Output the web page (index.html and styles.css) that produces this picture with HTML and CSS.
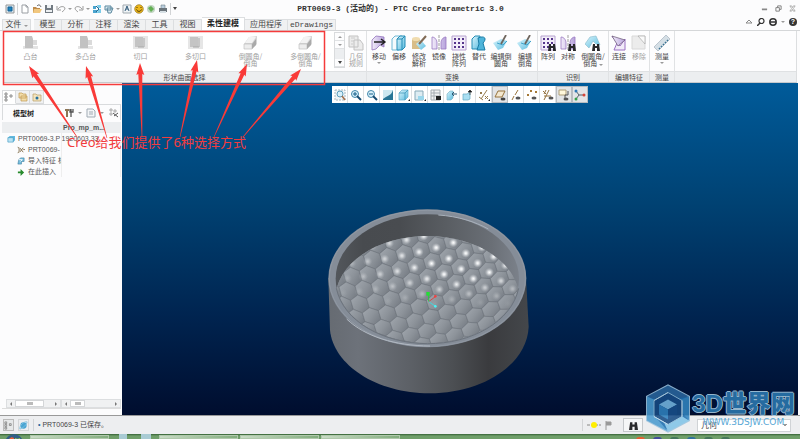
FILE: index.html
```html
<!DOCTYPE html>
<html lang="zh-CN">
<head>
<meta charset="utf-8">
<title>PRT0069-3 (活动的) - PTC Creo Parametric 3.0</title>
<link rel="stylesheet" href="styles.css">
</head>
<body>
<svg class="defs" aria-hidden="true">
  <defs>
    <linearGradient id="cyan" x1="0" y1="0" x2="1" y2="1"><stop offset="0" stop-color="#d9f4fc"/><stop offset="1" stop-color="#5bbcdf"/></linearGradient>
    <linearGradient id="lilac"><stop offset="0" stop-color="#f2ecfa"/><stop offset="1" stop-color="#b7a3dc"/></linearGradient>
    <symbol id="app" viewBox="0 0 10 10"><path d="M1 1h8v8H1z" fill="#d7e6ef" stroke="#999"/><path d="M3 3h4v4H3z" fill="#1c86c0" stroke="#145f94"/></symbol>
    <symbol id="new" viewBox="0 0 10 10"><path d="M2 1h4l2 2v6H2z" fill="#fff" stroke="#9a9ea3"/><path d="M6 1v2h2" fill="none" stroke="#9a9ea3"/></symbol>
    <symbol id="open" viewBox="0 0 10 10"><path d="M1 3h3l1 1h3v5H1z" fill="#bd8a4a"/><path d="M2 5h8L8 9H1z" fill="#f1c77f"/><path d="M5 2c2-2 3-1 4 1" fill="none" stroke="#555"/></symbol>
    <symbol id="save" viewBox="0 0 10 10"><path d="M1 1h8v8H1z" fill="#727a82"/><path d="M3 1h4v3H3zM2 6h6v2H2z" fill="#edf0f2"/></symbol>
    <symbol id="undo" viewBox="0 0 10 10"><path d="M2 5c2-3 6-3 7-1 0 2-2 3-3 4M1 2v4h4" fill="none" stroke="#9b9b9b"/></symbol>
    <symbol id="regen" viewBox="0 0 10 10"><path d="M1 2h3v3H1zM1 6h4v3H1z" fill="#49a4cf"/><path d="M5 1h4v3H6zM6 5h3v4H5z" fill="#7ccbe8"/><path d="M4 2l3 3-3 3" fill="none" stroke="#27678e"/></symbol>
    <symbol id="win" viewBox="0 0 10 10"><path d="M1 2h6v4H1zM3 4h6l-2 5H4z" fill="#dcecf3" stroke="#5b879e"/></symbol>
    <symbol id="atext" viewBox="0 0 10 10"><path d="M1 1h8v8H1z" fill="#eef3f6" stroke="#a1a9af"/><path d="M3 7l2-5 2 5M4 5h2" fill="none" stroke="#355d7c"/></symbol>
    <symbol id="smile" viewBox="0 0 10 10"><circle cx="5" cy="5" r="4.3" fill="#edb71b" stroke="#846413" stroke-width=".6"/><path d="M3 3v1M7 3v1M2.500 5.500c1 2.500 4 2.500 5 0" fill="none" stroke="#493709"/></symbol>
    <symbol id="globe" viewBox="0 0 10 10"><circle cx="5" cy="5" r="4" fill="#c1d5c2"/><path d="M2 4l3-2 3 3-3 3z" fill="#63b053"/></symbol>
    <symbol id="print" viewBox="0 0 10 10"><path d="M3 1h4v4H3z" fill="#b9cddd" stroke="#71808b" stroke-width=".6"/><path d="M1 4h8v4H1z" fill="#6b747b"/><path d="M2 7h6v2H2z" fill="#d7e0e5"/></symbol>

    <symbol id="boss" viewBox="0 0 16 16"><path d="M0 11h15v3H0z" fill="#e4e4e4"/><path d="M2 1h7l1 3v9H2z" fill="#c2c2c2"/><path d="M10 5h4v5h-4z" fill="#dadada"/></symbol>
    <symbol id="cut" viewBox="0 0 16 16"><path d="M0 1h15v13H0z" fill="#e6e6e6"/><path d="M2 2h8v10H2z" fill="#c4c4c4"/><path d="M11 3v9H5" fill="none" stroke="#a8a8a8"/></symbol>
    <symbol id="round" viewBox="0 0 16 16"><path d="M1 9l5-7 8-1v8l-5 5H1z" fill="#d5d5d5"/><path d="M1 9h8v5H1z" fill="#ededed" stroke="#bbb" stroke-width=".6"/><path d="M6 2h7L9 8H2z" fill="#f3f3f3"/><path d="M9 9l4-5v6l-4 4z" fill="#aaa"/></symbol>
    <symbol id="rules" viewBox="0 0 16 16"><path d="M1 1h9v11H1zM6 5h6l3 4v6H6z" fill="#ececec" stroke="#c2c2c2"/><path d="M3 3h4M3 6h3M3 9h2" stroke="#ccc"/></symbol>
    <symbol id="move" viewBox="0 0 16 16"><path d="M1 5l4-4 8 1v10l-4-2-4 4-4 1z" fill="url(#lilac)" stroke="#9373bd" stroke-width=".8"/><path d="M3 7h10M10 4l4 3-4 3" fill="none" stroke="#222" stroke-width="1.400"/></symbol>
    <symbol id="offset" viewBox="0 0 16 16"><path d="M1 4l3-3h7L8 4v11H1z" fill="#f4fafc" stroke="#71b8d5"/><path d="M6 4l3-3h5v11l-3 3H6z" fill="url(#cyan)" stroke="#248db7"/><path d="M6 4h5v11M11 4l3-3" fill="none" stroke="#248db7"/></symbol>
    <symbol id="modify" viewBox="0 0 16 16"><path d="M1 4h8v10H1z" fill="#d8bd88"/><ellipse cx="5" cy="4" rx="4" ry="2" fill="#f0dcaf"/><path d="M5 9l5-4 5 6-5 4z" fill="url(#cyan)"/><path d="M15 1L8 9" stroke="#816b56" stroke-width="2"/></symbol>
    <symbol id="mirror" viewBox="0 0 16 16"><path d="M1 2c3 0 5 3 5 6v6H1zM15 2c-3 0-5 3-5 6v6h5z" fill="url(#lilac)" stroke="#9b78c2" stroke-width=".8"/><path d="M8 0v16" stroke="#777" stroke-dasharray="3 1" stroke-width=".7"/></symbol>
    <symbol id="pattern" viewBox="0 0 16 16"><path d="M1 1h14v14H1z" fill="#f3eef9" stroke="#b6a2cf"/><path d="M3 4h2M7 4h2M11 4h2M3 8h2M7 8h2M11 8h2M3 12h2M7 12h2M11 12h2" stroke="#56358b" stroke-width="2"/></symbol>
    <symbol id="replace" viewBox="0 0 16 16"><path d="M1 4l3-3h5v13H1z" fill="url(#cyan)" stroke="#268db5"/><path d="M7 3c7-3 9 1 5 5l2 7H6l2-6z" fill="#4eb4da" stroke="#197ca6"/></symbol>
    <symbol id="editround" viewBox="0 0 16 16"><path d="M0 8l8-4 6 2-4 7-5 2z" fill="url(#cyan)"/><path d="M4 8l6 2 4-4" fill="none" stroke="#40a2ca"/><path d="M13 0L8 9" stroke="#6f665e" stroke-width="1.800"/></symbol>
    <symbol id="binos" viewBox="0 0 8 8"><path d="M1 1h2v2h2V1h2l1 7H5V5H3v3H0z" fill="#29292c"/></symbol>
    <symbol id="findround" viewBox="0 0 16 16"><path d="M0 9l5-7 6-1 4 9-4-1-3-3-4 7z" fill="url(#cyan)" stroke="#87b8ca" stroke-width=".6"/><use href="#binos" x="7" y="8" width="8" height="8"/></symbol>
    <symbol id="connect" viewBox="0 0 16 16"><path d="M1 1l8 10L14 4v11H3l3-7z" fill="#f1ebf8" stroke="#9a70c3"/><path d="M1 1l13 4-7 6z" fill="url(#lilac)" stroke="#655471" stroke-width=".7"/></symbol>
    <symbol id="remove" viewBox="0 0 16 16"><path d="M1 1h13v13H1z" fill="#ececec" stroke="#d8d8d8"/><path d="M7 1l7 8V1z" fill="#fafafa" stroke="#aaa" stroke-width=".7"/></symbol>
    <symbol id="ruler" viewBox="0 0 16 16"><path d="M0 12L12 0l4 4L4 16z" fill="#d5dfe6" stroke="#9caab5" stroke-width=".6"/><path d="M5 13l1 1M7 11l1 1M9 9l1 1M11 7l1 1M13 5l1 1" stroke="#397393" stroke-width="1.500"/></symbol>

    <symbol id="v-fit" viewBox="0 0 12 12"><path d="M1 1h10v10H1z" fill="#eef4f7" stroke="#a6b8c0" stroke-dasharray="2 1"/><circle cx="6" cy="5" r="3" fill="#d7f0fa" stroke="#5e9fbd"/><path d="M8 7l3 4" stroke="#a5714d" stroke-width="1.500"/></symbol>
    <symbol id="v-in" viewBox="0 0 12 12"><circle cx="5" cy="5" r="3.500" fill="#d7f0fa" stroke="#4388ab"/><path d="M7 7l4 4" stroke="#174c72" stroke-width="2"/><path d="M3 5h4M5 3v4" stroke="#155c87"/></symbol>
    <symbol id="v-out" viewBox="0 0 12 12"><circle cx="5" cy="5" r="3.500" fill="#d7f0fa" stroke="#4388ab"/><path d="M7 7l4 4" stroke="#174c72" stroke-width="2"/><path d="M3 5h4" stroke="#155c87"/></symbol>
    <symbol id="v-paint" viewBox="0 0 12 12"><path d="M1 1h10v10H1z" fill="#277596"/><path d="M1 1h10C9 7 6 6 1 10z" fill="#cce8f1"/></symbol>
    <symbol id="v-box" viewBox="0 0 12 12"><path d="M1 4l3-3h6v7l-3 3H1z" fill="url(#cyan)" stroke="#65afcd" stroke-width=".7"/><path d="M1 4h6v7M7 4l3-3" fill="none" stroke="#348fb4" stroke-width=".7"/><path d="M10 12l2-2v2z" fill="#222"/></symbol>
    <symbol id="v-page" viewBox="0 0 12 12"><path d="M1 2h8v9H1z" fill="#ddecf2" stroke="#87a9b8"/><path d="M4 7h6v4H4z" fill="#9ad6eb"/><path d="M10 12l2-2v2z" fill="#222"/></symbol>
    <symbol id="v-list" viewBox="0 0 12 12"><path d="M1 1h9v10H1zM1 4h9M1 7h9M4 1v10" fill="#f2f2f2" stroke="#a5abb0"/><path d="M6 7h5v4H6z" fill="#222"/></symbol>
    <symbol id="v-slice" viewBox="0 0 12 12"><path d="M1 5l3-3h3v7l-2 2H1z" fill="url(#cyan)" stroke="#77aec3" stroke-width=".6"/><path d="M11 5H6m2-2L6 5l2 2" fill="none" stroke="#2a5a75"/></symbol>
    <symbol id="v-orient" viewBox="0 0 12 12"><path d="M1 5h4l3-2v7l-2 1H1z" fill="#a9dff2" stroke="#62a8c2" stroke-width=".7"/><path d="M8 1v5M6 3h4l-2-2z" stroke="#333" stroke-width=".7"/></symbol>
    <symbol id="v-datum" viewBox="0 0 12 12"><path d="M3 10L9 1M2 3l2 2M4 3L2 5M7 7l3 3M10 7l-3 3M1 8l4 3" stroke="#957a4b"/><path d="M10 12l2-2v2z" fill="#222"/></symbol>
    <symbol id="v-plane" viewBox="0 0 12 12"><path d="M1 8l3-6h7L8 8z" fill="#f3e8d0" stroke="#96733c"/><ellipse cx="9" cy="10" rx="2.500" ry="1.500" fill="#444"/></symbol>
    <symbol id="v-axis" viewBox="0 0 12 12"><path d="M2 11l2-4M5 6l3-5" stroke="#9a753d"/><ellipse cx="8" cy="9" rx="2.500" ry="1.500" fill="#555"/></symbol>
    <symbol id="v-points" viewBox="0 0 12 12"><path d="M1 5l2 2M3 5L1 7M4 1l2 2M6 1L4 3M9 2l2 2M11 2L9 4" stroke="#a57937"/><ellipse cx="8" cy="9" rx="2.500" ry="1.500" fill="#555"/></symbol>
    <symbol id="v-csys" viewBox="0 0 12 12"><path d="M2 11L7 1M1 2l3 3M4 1L2 5M2 7h7" stroke="#94703b"/><ellipse cx="9" cy="9" rx="2.500" ry="1.500" fill="#555"/></symbol>
    <symbol id="v-note" viewBox="0 0 12 12"><path d="M1 1h7v5H1z" fill="#fff8dc" stroke="#ae9e78"/><path d="M10 2v4H7v3" fill="none" stroke="#555"/><ellipse cx="8" cy="10" rx="2.500" ry="1.500" fill="#555"/></symbol>
    <symbol id="v-spin" viewBox="0 0 12 12"><path d="M2 2l3 4-3 4M5 6h5" fill="none" stroke="#54616a"/><circle cx="2" cy="2" r="1.500" fill="#3079b6"/><circle cx="10" cy="6" r="1.500" fill="#d54538"/><circle cx="2" cy="10" r="1.500" fill="#34a14a"/></symbol>
    <symbol id="treeico" viewBox="0 0 10 10"><path d="M1 1h2v2H1zM1 4h2v2H1zM1 7h2v2H1zM6 3h2v2H6z" fill="none" stroke="#777" stroke-width=".8"/></symbol>
  </defs>
</svg>

<div class="app">
  <header class="titlebar">
    <nav class="quick" aria-label="快速访问">
      <button aria-label="窗口"><svg><use href="#app"/></svg></button><i class="bar"></i>
      <button aria-label="新建"><svg><use href="#new"/></svg></button>
      <button aria-label="打开"><svg><use href="#open"/></svg></button>
      <button aria-label="保存"><svg><use href="#save"/></svg></button>
      <button aria-label="撤消"><svg><use href="#undo"/></svg></button><b class="caret"></b>
      <button class="flip" aria-label="重做"><svg><use href="#undo"/></svg></button><b class="caret"></b>
      <button aria-label="重新生成"><svg><use href="#regen"/></svg></button>
      <button aria-label="切换窗口"><svg><use href="#win"/></svg></button><b class="caret"></b>
      <button aria-label="文本"><svg><use href="#atext"/></svg></button>
      <button aria-label="表情"><svg><use href="#smile"/></svg></button>
      <button aria-label="网络"><svg><use href="#globe"/></svg></button>
      <button aria-label="打印"><svg><use href="#print"/></svg></button><i class="bar"></i><b class="caret dark"></b>
    </nav>
    <h1>PRT0069-3 (活动的) - PTC Creo Parametric 3.0</h1>
    <div class="winctl">
      <button aria-label="最小化"><svg viewBox="0 0 8 8"><path d="M1 5h6" stroke="#888" stroke-width="2"/></svg></button>
      <button aria-label="还原"><svg viewBox="0 0 8 8"><path d="M1 3h4v4H1zM3 3V1h4v4H5" fill="none" stroke="#777"/></svg></button>
      <button aria-label="关闭"><svg viewBox="0 0 8 8"><path d="M1 1h2l1 2 1-2h2L5 4l2 3H5L4 5 3 7H1l2-3z" fill="#fff" stroke="#888" stroke-width=".7"/></svg></button>
    </div>
  </header>

  <nav class="tabs">
    <button class="file">文件 <b class="caret"></b></button>
    <button>模型</button><button>分析</button><button>注释</button><button>渲染</button><button>工具</button><button>视图</button>
    <button class="wide active">柔性建模</button><button class="wide">应用程序</button><button class="wide mono">eDrawings</button>
    <span class="help">
      <svg viewBox="0 0 8 8"><path d="M1 5l3-3 3 3z" fill="#fff" stroke="#888"/></svg>
      <svg viewBox="0 0 8 8"><circle cx="4.500" cy="3" r="2.500" fill="none" stroke="#333" stroke-width="1.200"/><path d="M3 5L0 8" stroke="#333" stroke-width="1.500"/></svg>
      <svg viewBox="0 0 8 8"><circle cx="4" cy="4" r="3.200" fill="none" stroke="#333" stroke-width="1.500"/><path d="M1 4h6" stroke="#333" stroke-width="1.500"/></svg>
      <b class="caret"></b>
      <span class="q">?</span>
    </span>
  </nav>

  <section class="ribbon">
    <div class="group shape">
      <div class="items">
        <div class="gallery">
          <button><svg><use href="#boss"/></svg><span>凸台</span></button>
          <button><svg><use href="#boss"/></svg><span>多凸台</span></button>
          <button><svg><use href="#cut"/></svg><span>切口</span></button>
          <button><svg><use href="#cut"/></svg><span>多切口</span></button>
          <button><svg><use href="#round"/></svg><span>倒圆角/<br>倒角</span></button>
          <button><svg><use href="#round"/></svg><span>多倒圆角/<br>倒角</span></button>
        </div>
        <div class="scroller"><button aria-label="上"><b class="caret up"></b></button><button aria-label="下"><b class="caret"></b></button><i></i><button aria-label="更多"><b class="caret dark"></b></button></div>
        <button class="off"><svg><use href="#rules"/></svg><span>几何<br>规则</span></button>
      </div>
      <h2>形状曲面选择</h2>
    </div>
    <div class="group">
      <div class="items">
        <button class="push"><svg><use href="#move"/></svg><span>移动</span><b class="caret"></b></button>
        <button><svg><use href="#offset"/></svg><span>偏移</span></button>
        <button><svg><use href="#modify"/></svg><span>修改<br>解析</span></button>
        <button><svg><use href="#mirror"/></svg><span>镜像</span></button>
        <button><svg><use href="#pattern"/></svg><span>挠性<br>阵列</span></button>
        <button><svg><use href="#replace"/></svg><span>替代</span></button>
        <button class="w24"><svg><use href="#editround"/></svg><span>编辑倒<br>圆角</span></button>
        <button class="w24"><svg><use href="#editround"/></svg><span>编辑<br>倒角</span></button>
      </div>
      <h2>变换</h2>
    </div>
    <div class="group">
      <div class="items">
        <button><i class="pair"><svg><use href="#pattern"/></svg><svg class="bino"><use href="#binos"/></svg></i><span>阵列</span></button>
        <button><i class="pair"><svg><use href="#mirror"/></svg><svg class="bino"><use href="#binos"/></svg></i><span>对称</span></button>
        <button class="w28"><svg><use href="#findround"/></svg><span>倒圆角/<br>倒角 <b class="caret"></b></span></button>
      </div>
      <h2>识别</h2>
    </div>
    <div class="group">
      <div class="items">
        <button><svg><use href="#connect"/></svg><span>连接</span></button>
        <button class="off"><svg><use href="#remove"/></svg><span>移除</span></button>
      </div>
      <h2>编辑特征</h2>
    </div>
    <div class="group">
      <div class="items"><button class="w24"><svg><use href="#ruler"/></svg><span>测量</span><b class="caret"></b></button></div>
      <h2>测量</h2>
    </div>
    <div class="group rest"><div class="items"></div><h2></h2></div>
  </section>

  <main>
    <aside>
      <div class="sidetabs">
        <button class="on" aria-label="模型树"><svg><use href="#treeico"/></svg></button>
        <button aria-label="文件夹"><svg viewBox="0 0 10 10"><path d="M1 1h3l1 1h3v4H1zM3 4h6v5H3z" fill="#f3dda9" stroke="#c09850" stroke-width=".7"/></svg></button>
        <button aria-label="收藏夹"><svg viewBox="0 0 10 10"><path d="M1 2h3l1 1h4v6H1z" fill="#f3e4bd" stroke="#b99d64" stroke-width=".7"/><circle cx="5" cy="6" r="1.500" fill="#27729e"/></svg></button>
      </div>
      <div class="treehead">
        <strong>模型树</strong>
        <svg viewBox="0 0 10 10"><path d="M1 1h4v2H4v6H2V3H1z" fill="#8c7556"/><path d="M7 1v8M6 1v3h3V1" stroke="#555" stroke-width="1.300" fill="none"/></svg><b class="caret"></b>
        <svg viewBox="0 0 10 10"><path d="M1 1h6l2 2v6H1z" fill="#f4f6f8" stroke="#a1abb4"/><path d="M3 4h4M3 6h4" stroke="#a1abb4"/></svg><b class="caret"></b>
        <svg class="end" viewBox="0 0 10 10"><path d="M1 1h2v2H1zM1 5h2v2H1zM5 2h2v2H5z" fill="none" stroke="#999" stroke-width=".8"/><path d="M4 5l5 4M5 8l4-3" stroke="#555"/></svg>
      </div>
      <table>
        <thead><tr><th></th><th>Pro_mp_m...</th></tr></thead>
        <tbody>
          <tr><td><svg viewBox="0 0 9 9"><path d="M1 3l2-2h6v5L7 8H1z" fill="#62b9df"/><path d="M1 3h6v5H1z" fill="#b9e3f4" stroke="#328fbb" stroke-width=".6"/></svg>PRT0069-3.P</td><td>1920603.33</td></tr>
          <tr><td class="in"><svg viewBox="0 0 9 9"><path d="M1 1c2 2 2 5 0 7M3 2l4 5M7 2L3 7M7 4h2" fill="none" stroke="#7f6a47"/></svg>PRT0069-</td><td></td></tr>
          <tr><td class="in"><svg viewBox="0 0 9 9"><path d="M2 3l2-2h4v4H5v3H1z" fill="#79bfde" stroke="#2b7398" stroke-width=".6"/><path d="M2 3h4M4 5l2-2" stroke="#fff"/></svg>导入特征 标</td><td></td></tr>
          <tr><td class="in"><svg viewBox="0 0 9 9"><path d="M1 4h3V1l4 4-4 4V6H1z" fill="#278a2c"/></svg>在此插入</td><td></td></tr>
        </tbody>
      </table>
      <div class="scrolls">
        <div><b class="tri l"></b><i></i><b class="tri"></b></div>
        <div class="s2"><b class="tri l"></b><i></i><b class="tri"></b></div>
      </div>
    </aside>

    <section class="view">
      <div class="viewbar">
        <button aria-label="重新调整"><svg><use href="#v-fit"/></svg></button>
        <button aria-label="放大"><svg><use href="#v-in"/></svg></button>
        <button aria-label="缩小"><svg><use href="#v-out"/></svg></button>
        <button aria-label="重画"><svg><use href="#v-paint"/></svg></button>
        <button aria-label="显示样式"><svg><use href="#v-box"/></svg></button>
        <button aria-label="已保存方向"><svg><use href="#v-page"/></svg></button>
        <button aria-label="视图管理器"><svg><use href="#v-list"/></svg></button>
        <button aria-label="截面"><svg><use href="#v-slice"/></svg></button>
        <button aria-label="方向"><svg><use href="#v-orient"/></svg></button>
        <button aria-label="基准显示"><svg><use href="#v-datum"/></svg></button>
        <button class="on" aria-label="平面显示"><svg><use href="#v-plane"/></svg></button>
        <button aria-label="轴显示"><svg><use href="#v-axis"/></svg></button>
        <button aria-label="点显示"><svg><use href="#v-points"/></svg></button>
        <button aria-label="坐标系显示"><svg><use href="#v-csys"/></svg></button>
        <button class="on" aria-label="注释显示"><svg><use href="#v-note"/></svg></button>
        <button class="on" aria-label="旋转中心"><svg><use href="#v-spin"/></svg></button>
      </div>
      <svg class="model" viewBox="0 0 675 630">
        <defs>
          <linearGradient id="outer"><stop offset="0" stop-color="#666b72"/><stop offset=".15" stop-color="#6d727a"/><stop offset=".4" stop-color="#5d6167"/><stop offset=".62" stop-color="#4c4f53"/><stop offset=".8" stop-color="#3a3b3e"/><stop offset="1" stop-color="#44474b"/></linearGradient>
          <linearGradient id="wall"><stop offset="0" stop-color="#53575c"/><stop offset=".15" stop-color="#484b4f"/><stop offset=".35" stop-color="#494c50"/><stop offset=".6" stop-color="#595d62"/><stop offset=".85" stop-color="#6a6f76"/><stop offset="1" stop-color="#7b818a"/></linearGradient>
          <linearGradient id="cell" x1="0" y1=".2" x2="1" y2=".8"><stop offset="0" stop-color="#9fa5ac"/><stop offset=".5" stop-color="#8d939a"/><stop offset="1" stop-color="#747a82"/></linearGradient>
          <radialGradient id="glow"><stop offset="0" stop-color="#fff"/><stop offset=".3" stop-color="#eef0f2" stop-opacity=".85"/><stop offset="1" stop-color="#c4c8cd" stop-opacity="0"/></radialGradient>
          <clipPath id="inner"><ellipse cx="337" cy="251" rx="275" ry="193"/></clipPath>
          <clipPath id="floor"><ellipse cx="337" cy="312" rx="276" ry="189"/></clipPath>
        </defs>
        <path d="M40 250L45 405C55 510 185 595 343 595S636 510 641 395L633 250z" fill="url(#outer)"/>
        <ellipse cx="337" cy="250" rx="297" ry="207" fill="#858d98"/>
        <ellipse cx="337" cy="250" rx="294" ry="204" fill="none" stroke="#9098a3" stroke-width="3"/>
        <ellipse cx="337" cy="251" rx="275" ry="193" fill="url(#wall)"/>
        <g clip-path="url(#inner)"><g clip-path="url(#floor)"><rect width="675" height="630" fill="#858b92"/><g id="cells"></g></g></g>
        <path d="M64 280C85 380 205 445 337 446S590 380 611 280" fill="none" stroke="#6c737c" stroke-width="3"/>
        <path d="M95 372C150 425 240 452 345 453" fill="none" stroke="#b2b9c2" stroke-width="3"/>
        <path d="M370 60C430 64 480 80 520 102" fill="none" stroke="#a9b1bb" stroke-width="3"/>
        <path d="M341 320V300" stroke="#2fc840" stroke-width="3"/><path d="M341 320l20-15" stroke="#d34a4a" stroke-width="3"/><path d="M341 320l19 13" stroke="#42d6dc" stroke-width="3"/>
        <path d="M334 291h10v11h-10z" fill="#22e034"/><circle cx="361" cy="304" r="4" fill="#ed4343"/><circle cx="361" cy="334" r="4" fill="#4cf1f4"/>
      </svg>
    </section>
  </main>

  <footer class="status">
    <button class="on" aria-label="导航器"><svg><use href="#treeico"/></svg></button>
    <button aria-label="浏览器"><svg viewBox="0 0 10 10"><circle cx="5" cy="5" r="3.500" fill="#4aa5d3"/><path d="M1 9C0 5 6 0 9 1c0 3-5 7-8 8z" fill="none" stroke="#7fc0df"/></svg></button>
    <i class="bar"></i>
    <span class="msg"><b>•</b> PRT0069-3 已保存。</span>
    <i class="bar"></i>
    <svg class="lamp" viewBox="0 0 14 8"><path d="M0 4h14" stroke="#bbb" stroke-width="2" stroke-dasharray="3 1"/><circle cx="7" cy="4" r="3" fill="#ffee00"/></svg>
    <svg class="flag" viewBox="0 0 8 10"><path d="M1 1v9M1 2h5v3H1" fill="#999" stroke="#999"/></svg>
    <button class="find" aria-label="查找"><svg><use href="#binos"/></svg></button>
    <select aria-label="过滤器"><option>几何</option></select>
  </footer>
  <div class="taskbar">
    <svg class="orb" viewBox="0 0 18 18"><circle cx="9" cy="9" r="9" fill="#315f86"/><path d="M4 5c2-2 3-2 5-1v4H3z" fill="#e8623a"/><path d="M10 4c2 1 3 1 5 0v4h-5z" fill="#9bcb4c"/></svg>
    <i></i><em></em><i></i><i></i><i></i>
    <span class="tray"><u></u><u></u><u></u><u></u><u></u><u></u></span>
  </div>

  <div class="mark">
    <svg viewBox="0 0 46 48">
      <path d="M23 1l21 11v24L23 47 2 36V12z" fill="#1f6fb0" stroke="#9cc4df" stroke-width="2"/>
      <path d="M23 1l21 11-12 2-9-5-12 6-9-3z" fill="#2a659c"/><path d="M44 12v24l-8-9V15z" fill="#3285c0"/><path d="M44 36L23 47l-4-9 15-8z" fill="#83c5e8"/><path d="M2 36V12l9 4v17l12 14z" fill="#4b9bd0"/>
      <path d="M23 8l14 8v16l-14 8-14-8V16z" fill="#174c85" stroke="#8dbddb"/>
      <path d="M23 15l9 5-9 5-9-5z" fill="#74b5df"/><path d="M14 20l9 5v10l-9-5z" fill="#2f80bd"/><path d="M32 20l-9 5v10l9-5z" fill="#194f8b"/>
      <path d="M23 8L9 16M37 16v16M9 32l14 8" stroke="#b8d8eb"/>
    </svg>
    <p><strong><em>3D</em>世界网</strong><span>WWW.3DSJW.COM</span></p>
  </div>

  <div class="notes">
    <svg id="arrows" viewBox="0 0 800 439"><rect x="3.500" y="31.500" width="321" height="53" fill="none" stroke="#f53b3b" stroke-width="1.500"/></svg>
    <p>Creo给我们提供了6种选择方式</p>
  </div>
</div>
<script src="model.js"></script>
</body>
</html>
```

FILE: styles.css
```css
* { box-sizing: border-box; }
body { margin: 0; overflow: hidden; background: #fcfcfd; color: #444; font: 7px/10px "Liberation Sans", "Noto Sans CJK SC", sans-serif; }
button { margin: 0; padding: 0; border: 0; background: none; color: inherit; font: inherit; }
h1, h2, p { margin: 0; }
svg { display: block; flex: none; }
.defs { position: absolute; width: 0; height: 0; }
.app { position: relative; display: flex; flex-direction: column; height: 100vh; }
.caret { display: inline-block; flex: none; border: 2px solid transparent; border-top-color: #999; border-bottom: 0; }
.caret.dark { border-top: 3px solid #444; }
.caret.up { border-top: 0; border-bottom: 2px solid #999; }
.bar { width: 1px; height: 12px; background: #d2d4d6; }

.titlebar { display: grid; grid-template-columns: 1fr auto 1fr; align-items: center; height: 17px; padding: 0 4px 0 5px; }
.quick { display: flex; align-items: center; gap: 2px; }
.quick svg { width: 10px; height: 10px; }
.flip svg { transform: scaleX(-1); }
.titlebar h1 { font: bold 8px/12px "Liberation Mono", "Noto Sans CJK SC", monospace; color: #333; white-space: nowrap; }
.winctl { display: flex; justify-content: flex-end; gap: 7px; }
.winctl svg { width: 7px; height: 7px; }

.tabs { display: flex; align-items: flex-end; height: 14px; padding: 0 3px 0 2px; font-size: 8px; border-bottom: 1px solid #d5d7d9; }
.tabs > button { width: 28px; height: 11px; background: #f0f1f2; border: 1px solid #dcdee0; border-width: 1px 1px 0 0; }
.tabs > .file { width: 29px; margin-right: 3px; border-left-width: 1px; }
.tabs > .wide { width: 43px; }
.tabs > .mono { width: 48px; font-family: "Liberation Mono", monospace; }
.tabs > .active { height: 13px; background: #fff; font-weight: bold; color: #222; }
.help { display: flex; align-items: center; gap: 4px; height: 16px; margin-left: auto; }
.help svg { width: 8px; height: 8px; }
.q { width: 8px; height: 8px; border-radius: 50%; background: #333; color: #fff; font: bold 7px/8px "Liberation Sans", sans-serif; text-align: center; }

.ribbon { display: flex; height: 52px; margin: 0 3px; border-bottom: 1px solid #c6c9cc; border-right: 1px solid #dcdee0; }
.group { display: flex; flex-direction: column; border-right: 1px solid #e0e2e4; }
.shape { width: 364px; }
.rest { flex: 1; border: 0; }
.items { display: flex; flex: 1; background: #fdfdfe; line-height: 7px; }
.group h2 { height: 11px; background: #eceef0; border-top: 1px solid #dfe1e3; font: 7px/10px "Noto Sans CJK SC", sans-serif; text-align: center; }
.items button { display: flex; flex-direction: column; align-items: center; justify-content: flex-start; gap: 2px; width: 20px; padding-top: 4px; white-space: nowrap; text-align: center; font-family: "Noto Sans CJK SC", sans-serif; }
.items button svg { width: 16px; height: 16px; }
.items .push { margin-left: 2px; }
.items .w24 { width: 24px; }
.items .w28 { width: 30px; }
.items .off, .gallery { color: #a0a0a0; }
.gallery { display: grid; grid-template-columns: repeat(6, 55px); flex: 1; background: #fff; }
.items .gallery button { width: 55px; }
.scroller { display: flex; flex-direction: column; width: 11px; margin: 1px 1px 3px 0; border: 1px solid #d9dbdd; }
.items .scroller button { width: 9px; height: 8px; padding: 0; justify-content: center; border-bottom: 1px solid #e0e2e4; }
.scroller i { flex: 1; background: #eceef0; }
.pair { position: relative; }
.items button .bino { position: absolute; right: 0; bottom: 0; width: 8px; height: 8px; }

main { display: flex; flex: 1; min-height: 0; padding-right: 2px; border-bottom: 1px solid #999; }
aside { display: flex; flex-direction: column; width: 122px; padding: 7px 1px 6px 2px; background: #fcfcfd; }
.sidetabs { display: flex; height: 14px; }
.sidetabs button { width: 14px; background: #f0f1f2; border: 1px solid #d9dbdd; border-left: 0; }
.sidetabs .on { background: #fff; border-bottom-color: #fff; border-left: 1px solid #d9dbdd; }
.sidetabs svg { width: 10px; height: 10px; margin: auto; }
.treehead { display: flex; align-items: center; gap: 4px; height: 16px; padding-left: 10px; border: 1px solid #d9dbdd; border-bottom: 0; }
.treehead strong { width: 47px; font-family: "Noto Sans CJK SC", sans-serif; color: #222; }
.treehead svg { width: 10px; height: 10px; }
.treehead .end { margin: 0 1px 0 auto; }
table { width: 100%; table-layout: fixed; border-collapse: collapse; margin-top: 2px; color: #555; }
th { height: 11px; padding: 0 0 0 2px; background: #eceef0; line-height: 10px; text-align: left; white-space: nowrap; }
th:first-child { width: 59px; }
td { height: 11px; padding: 0; overflow: hidden; white-space: nowrap; border-right: 1px solid #eee; line-height: 10px; }
td:first-child { padding-left: 5px; }
td.in:first-child { padding-left: 15px; }
td svg { display: inline-block; width: 8px; height: 8px; margin-right: 3px; vertical-align: -2px; }
.scrolls { display: flex; margin-top: auto; padding-left: 4px; border-bottom: 1px solid #ddd; }
.scrolls div { display: flex; align-items: center; justify-content: space-between; width: 55px; height: 9px; padding: 0 3px; background: #f0f1f2; border: 1px solid #dcdee0; }
.scrolls .s2 { flex: 1; }
.scrolls i { width: 29px; height: 7px; margin-right: auto; margin-left: 3px; background: #fff linear-gradient(#bbb, #bbb) center / 6px 3px no-repeat; border: 1px solid #d4d6d8; }
.scrolls .s2 i { width: 15px; }
.tri { border: 2px solid transparent; border-left-color: #777; border-right: 0; }
.tri.l { border-left: 0; border-right: 2px solid #777; }

.view { position: relative; flex: 1; padding-top: 3px; background: linear-gradient(#005b9a, #004273 36%, #002450 70%, #000d2e); overflow: hidden; }
.viewbar { display: flex; width: max-content; margin: 0 auto; height: 17px; background: #f5f6f7; }
.viewbar button { width: 16px; border-right: 1px solid #dde0e2; background: #fff; }
.viewbar .on { background: #e2e4e6; border: 1px solid #b8bcc0; }
.viewbar svg { width: 12px; height: 12px; margin: auto; }
.model { position: absolute; left: calc(50% - 145px); top: 112px; width: 225px; height: 210px; }

.status { display: flex; align-items: center; gap: 4px; height: 18px; padding: 0 9px 0 3px; background: #edeef0; }
.status button { width: 11px; height: 12px; border: 1px solid #d4d6d8; }
.status .on { border-color: #bbb; background: #e6e8e9; }
.status button svg { width: 9px; height: 9px; margin: auto; }
.msg { flex: 1; }
.msg b { color: #27679d; }
.lamp { width: 14px; height: 8px; }
.flag { width: 8px; height: 10px; margin-right: 6px; }
.status .find { width: 20px; height: 14px; background: #f5f6f7; border-color: #c5c8cb; }
.status select { appearance: none; width: 94px; height: 13px; margin-left: 50px; padding: 0 3px; border: 1px solid #d0d3d6; background: #fff conic-gradient(from 315deg at 50% 100%, #999 90deg, transparent 0) right 3px center / 4px 2px no-repeat; color: #444; font: 8px/10px "Noto Sans CJK SC", sans-serif; }
.taskbar { display: flex; gap: 2px; height: 5px; padding-left: 30px; position: relative; overflow: hidden; background: linear-gradient(#356135, #6f9e69 2px); }
.taskbar i { width: 79px; margin-top: 1px; background: linear-gradient(90deg, #c9dbc5, #83ad7e); border: 1px solid #afc8ab; }
.taskbar em { width: 46px; background: linear-gradient(90deg, transparent 8px, #a9cbd4 8px 16px, transparent 16px 30px, #a9cbd4 30px 40px, transparent 40px); }
.orb { position: absolute; left: 5px; top: 0; width: 18px; height: 18px; }
.tray { display: flex; gap: 8px; margin: 3px 70px 0 auto; }
.tray u { width: 9px; height: 3px; background: #45765a; border-radius: 4px 4px 0 0; }
.tray u:first-child { background: #e45f32; }
.tray u:nth-child(2) { background: #434b9b; }
.tray u:nth-child(4) { background: #31729e; }

.mark { position: absolute; right: 4px; bottom: 6px; display: flex; align-items: center; opacity: .88; pointer-events: none; }
.mark svg { width: 46px; height: 49px; }
.mark p { display: flex; flex-direction: column; align-items: center; width: 105px; }
.mark strong { font: 900 24px/28px "Liberation Sans", "Noto Sans CJK SC", sans-serif; color: #2b78b0; white-space: nowrap; text-shadow: 1px 0 #a9cde2, -1px 0 #a9cde2, 0 1px #a9cde2, 0 -1px #a9cde2; }
.mark em { font-style: normal; }
.mark span { font: 9px/9px "DejaVu Sans", sans-serif; color: #3f9bd0; text-shadow: 0 0 1px #fff; white-space: nowrap; }

.notes { position: absolute; left: 0; top: 0; pointer-events: none; }
.notes svg { width: 800px; height: 439px; }
.notes p { position: absolute; left: 67px; top: 133px; color: #f23c3e; font: 13px/18px "Noto Sans", "Noto Sans CJK SC", sans-serif; white-space: nowrap; }
```

FILE: model.js
```js
const NS = "http://www.w3.org/2000/svg";
function add(parent, tag, attrs) {
  const el = document.createElementNS(NS, tag);
  for (const k in attrs) el.setAttribute(k, attrs[k]);
  parent.appendChild(el);
}

// Dimpled floor: a hexagonal lattice bent over a shallow dish.
function point(i, j) {
  const x = 48 * i + 35 * j;
  return [366 + x, 153 - 14 * i + 34 * j - 0.0004 * x * x - 0.5 * j * j];
}
const corners = [[1, 1], [-1, 2], [-2, 1], [-1, -1], [1, -2], [2, -1]];
const cells = document.getElementById("cells");
const glows = [];
for (let j = -3; j < 15; j++) {
  for (let i = -16; i < 9; i++) {
    const [x, y] = point(i, j);
    if (x < 20 || x > 660 || y < 90 || y > 500) continue;
    const pts = corners.map(([a, b]) => point(i + a / 3, j + b / 3).map(Math.round).join(",")).join(" ");
    add(cells, "polygon", { points: pts, fill: "url(#cell)", stroke: "#6b7179", "stroke-width": 1.5 });
    const shine = Math.max(0, 1.3 - Math.abs(x - 430) / 300) * Math.max(0, Math.min(1, (330 - y) / 100));
    if (shine > 0.05) {
      const shift = Math.max(-16, Math.min(4, (x - 400) / 14));
      glows.push({ cx: x + shift, cy: y + 5, r: 14, fill: "url(#glow)", opacity: Math.min(1, shine).toFixed(2) });
    }
  }
}
glows.forEach((g) => add(cells, "circle", g));

// Callout arrows: a tapered shaft ending in a solid head.
const arrows = document.getElementById("arrows");
[[77, 137, 29, 66], [107, 138, 86, 66], [142, 137, 140, 63], [180, 137, 197, 60], [214, 137, 247, 64], [243, 137, 301, 69]].forEach(([x1, y1, x2, y2]) => {
  const len = Math.hypot(x2 - x1, y2 - y1);
  const ux = (x2 - x1) / len, uy = (y2 - y1) / len;
  const at = (d, w) => (x2 - ux * d - uy * w) + "," + (y2 - uy * d + ux * w);
  const pts = [at(0, 0), at(12, 4), at(11, 2), at(len, 0.3), at(len, -0.3), at(11, -2), at(12, -4)];
  add(arrows, "polygon", { points: pts.join(" "), fill: "#f93a38" });
});
```
